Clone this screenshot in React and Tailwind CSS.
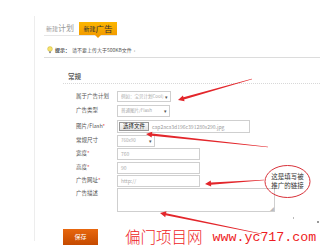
const cjk = { fontFamily: '"Noto Sans CJK SC", "Liberation Sans", sans-serif' };

const Arrow = ({ x1, y1, x2, y2 }) => {
  const dx = x2 - x1;
  const dy = y2 - y1;
  const len = Math.hypot(dx, dy);
  const ux = dx / len;
  const uy = dy / len;
  const nx = -uy;
  const ny = ux;
  const hx = x2 - ux * 6;
  const hy = y2 - uy * 6;
  const pts = [
    [x1 + nx * 0.3, y1 + ny * 0.3],
    [hx + nx * 1.1, hy + ny * 1.1],
    [hx + nx * 3, hy + ny * 3],
    [x2, y2],
    [hx - nx * 3, hy - ny * 3],
    [hx - nx * 1.1, hy - ny * 1.1],
    [x1 - nx * 0.3, y1 - ny * 0.3],
  ];
  return <polygon points={pts.map((p) => p.join(",")).join(" ")} fill="#e3262b" />;
};

const Field = ({ label, req, children, h, mt, top }) => (
  <div className={`flex ${top ? "items-start" : "items-center"} ${h} ${mt}`}>
    <div className={`w-[41px] shrink-0 text-[5.5px] leading-[7px] text-[#555] ${top ? "pt-[2px]" : ""}`}>
      {label}
      {req ? <span className="text-[#e02020]">*</span> : null}
    </div>
    {children}
  </div>
);

const Select = ({ w, text }) => (
  <div className={`flex h-full ${w} items-center border border-[#cfcfcf] pl-[3px] pr-[2px] text-[4.5px] text-[#aaa]`}>
    <span className="min-w-0 flex-1 overflow-hidden whitespace-nowrap">{text}</span>
    <span className="ml-[1px] text-[5px] text-[#555]">▾</span>
  </div>
);

const Input = ({ text }) => (
  <div className="flex h-full w-[83px] items-center border border-[#cfcfcf] px-[3px] text-[5px] text-[#aaa]">
    {text}
  </div>
);

const App = () => {
  return (
    <div className="relative h-[248px] w-[320px] overflow-hidden bg-white" style={cjk}>
      <div className="ml-[34px] mt-[16px] flex h-[225px] flex-col border-l border-[#ededed] pl-[9px]">
        <div className="mt-[6px] flex h-[19px] w-[73px] border-b border-[#e6e6e6]">
          <div className="flex w-[35px] items-center pl-[2px] text-[#9a9a9a]">
            <span className="text-[6px]">新建</span>
            <span className="text-[8px]">计划</span>
          </div>
          <div className="relative flex w-[38px] items-center justify-center bg-gradient-to-b from-[#fbb600] to-[#f39c00] text-[#333]">
            <span className="text-[6px]">新建</span>
            <span className="text-[8.5px]">广告</span>
            <span className="absolute left-[16px] top-full h-0 w-0 border-x-[3px] border-t-[3px] border-x-transparent border-t-[#f39c00]" />
          </div>
        </div>

        <div className="mt-[10px] flex h-[8px] items-center pl-[3px] text-[5px] text-[#555]">
          <svg width="6" height="8" viewBox="0 0 6 8" className="mr-[2px]">
            <circle cx="3" cy="3" r="2.4" fill="#f7e36a" stroke="#c9b23a" strokeWidth="0.5" />
            <rect x="2" y="5.3" width="2" height="1.8" fill="#999" />
          </svg>
          <span className="font-bold text-[#444]">提示：</span>
          <span className="ml-[2px]">请不要上传大于500KB文件</span>
          <span className="ml-[2px] text-[#888]">›</span>
        </div>

        <div className="mt-[3px] border-t border-[#dcdcdc]" />

        <div className="flex flex-col pl-[19px]">
          <div className="mt-[14px] flex h-[12px] items-start border-b border-dotted border-[#d8d8d8] pl-[5px] text-[6.5px] font-bold leading-[9px] text-[#666]">
            常规
          </div>

          <div className="ml-[13px] mt-[7px] flex flex-col">
            <Field label="属于广告计划" h="h-[11px]" mt="">
              <Select w="w-[54px]" text="例如：宝贝计划Cool)" />
            </Field>
            <Field label="广告类型" h="h-[12px]" mt="mt-[3px]">
              <Select w="w-[53px]" text="普通图片/Flash" />
            </Field>
            <Field label="图片/Flash" req h="h-[13px]" mt="mt-[3px]">
              <div className="flex h-full w-[133px] items-center border border-[#cfcfcf] pl-[1px] text-[5px]">
                <div className="flex h-[9px] items-center border border-[#999] bg-gradient-to-b from-[#fafafa] to-[#e2e2e2] px-[3px] text-[5.5px] text-[#222]">
                  选择文件
                </div>
                <span className="ml-[3px] text-[#999]">cap2aca3d196c391280x290.jpg</span>
              </div>
            </Field>
            <Field label="常规尺寸" h="h-[12px]" mt="mt-[2px]">
              <Select w="w-[38px]" text="760x90" />
            </Field>
            <Field label="宽度" req h="h-[12px]" mt="mt-[1px]">
              <Input text="760" />
            </Field>
            <Field label="高度" req h="h-[12px]" mt="mt-[2px]">
              <Input text="90" />
            </Field>
            <Field label="广告网址" req h="h-[12px]" mt="mt-[1px]">
              <Input text="http://" />
            </Field>
            <Field label="广告描述" h="h-[24px]" mt="mt-[1px]" top>
              <div className="relative h-full w-[158px] border border-[#cfcfcf]">
                <span className="absolute bottom-0 right-0 text-[4px] leading-[4px] text-[#bbb]">◢</span>
              </div>
            </Field>
          </div>

          <div className="mt-[17px] flex h-[16px] w-[35px] shrink-0 items-center justify-center bg-gradient-to-b from-[#e8670e] to-[#c54a00] text-[6px] text-white">
            保存
          </div>
        </div>
      </div>

      <svg className="absolute left-0 top-0" width="320" height="248" viewBox="0 0 320 248">
        <Arrow x1={252} y1={79} x2={178} y2={100} />
        <Arrow x1={268} y1={147} x2={146} y2={134} />
        <Arrow x1={264} y1={180} x2={205} y2={184} />
        <Arrow x1={262} y1={234} x2={160} y2={213} />
        <ellipse cx="287.5" cy="181.5" rx="22.5" ry="16" fill="none" stroke="#d8323a" strokeWidth="1" />
        <rect x="293" y="217" width="1" height="2" fill="#bbb" />
        <rect x="317" y="221" width="2" height="2" fill="#999" />
      </svg>

      <div className="absolute left-[267px] top-[172px] flex w-[41px] flex-col items-center text-[6.5px] leading-[9px] text-[#333]">
        <span>这是填写被</span>
        <span>推广的链接</span>
      </div>

      <div className="absolute left-[125px] top-[227px] flex items-end text-[#ee1c24]">
        <span className="text-[15.5px] font-extralight leading-[19px]">偏门项目网</span>
        <span
          className="ml-[10px] text-[13.3px] leading-[17px]"
          style={{ fontFamily: '"Liberation Mono", monospace' }}
        >
          www.yc717.com
        </span>
      </div>
    </div>
  );
};

export default App;
